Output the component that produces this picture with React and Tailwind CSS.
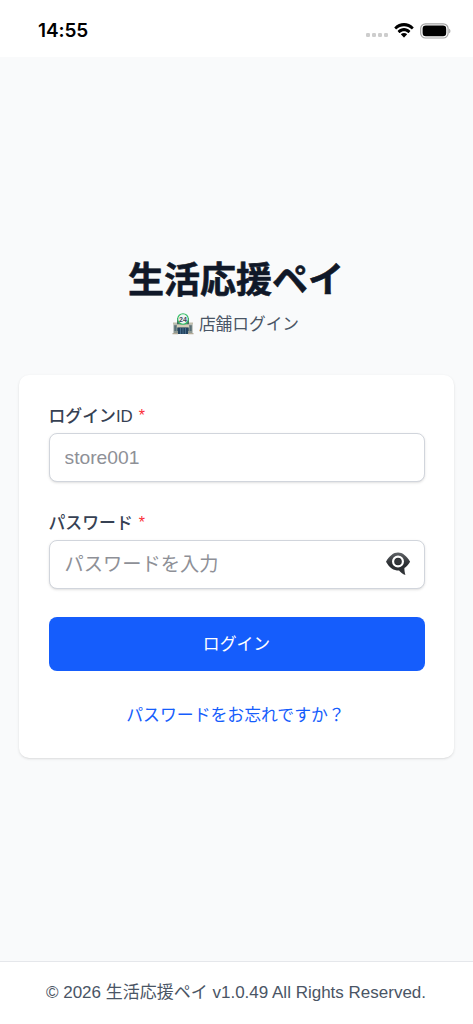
function StatusBar() {
  return (
    <div className="flex h-[57px] shrink-0 items-center justify-between bg-white pt-[4px] pr-[22px] pl-[38px]">
      <span className="pt-px font-['Inter'] text-[19px] leading-6 font-semibold tracking-[-0.1px] text-black">14:55</span>
      <div className="flex items-center">
        <div className="mt-[9px] mr-[6.5px] flex gap-[1.7px]">
          <span className="size-[4px] rounded-[1.2px] bg-[#cdcdcd]" />
          <span className="size-[4px] rounded-[1.2px] bg-[#cdcdcd]" />
          <span className="size-[4px] rounded-[1.2px] bg-[#cdcdcd]" />
          <span className="size-[4px] rounded-[1.2px] bg-[#cdcdcd]" />
        </div>
        <svg className="mr-[6px] h-[15px] w-[20px]" viewBox="0 0 17 12.3" preserveAspectRatio="none" fill="#000">
          <path d="M8.5 2.6c2.4 0 4.7.9 6.4 2.6.1.1.3.1.5 0l1.2-1.3c.2-.1.2-.4 0-.5-4.5-4.4-11.7-4.4-16.2 0-.2.1-.2.4 0 .5l1.2 1.3c.2.1.4.1.5 0C3.8 3.5 6.1 2.6 8.5 2.6Z" />
          <path d="M8.5 6.7c1.3 0 2.6.5 3.5 1.4.2.1.4.1.5 0l1.3-1.3c.1-.2.1-.4 0-.5-3-2.9-7.6-2.9-10.6 0-.1.1-.1.3 0 .5l1.3 1.3c.1.1.3.1.5 0 1-.9 2.2-1.4 3.5-1.4Z" />
          <path d="M11 9.5c.1-.2.1-.4 0-.5-1.400-1.200-3.600-1.200-5 0-.1.1-.1.3 0 .5l2.200 2.200c.2.2.4.2.6 0Z" />
        </svg>
        <svg className="h-[16px] w-[31px]" viewBox="0 0 31 16" fill="none">
          <rect x="0.7" y="0.8" width="27.4" height="14.2" rx="4.8" stroke="#a3a3a3" strokeWidth="1.2" />
          <rect x="2.6" y="2.6" width="23.6" height="10.6" rx="3.2" fill="#000" />
          <path d="M29.2 5.7c1.6.6 1.6 4 0 4.600Z" fill="#a3a3a3" />
        </svg>
      </div>
    </div>
  );
}

function StoreIcon() {
  return (
    <svg className="h-[22px] w-[22px]" viewBox="0 0 22 22">
      <path d="M1 9.5h20v2H1z" fill="#c2bfad" />
      <path d="M1.5 11.5h19V21h-19z" fill="#8f9992" />
      <path d="M2.5 12.5H6V18H2.5zM16 12.5h3.5V18H16z" fill="#4d6670" />
      <path d="M4.3 12.5V18M17.7 12.5V18" stroke="#a7b0aa" strokeWidth="0.6" />
      <path d="M5 5h12v6.5H5z" fill="#477064" />
      <path d="M5 11.5h12v3H5z" fill="#d4ceb8" />
      <path d="M6 14.5h10V21H6z" fill="#24435f" />
      <path d="M8.5 15v6M11 15v6M13.5 15v6" stroke="#5f88aa" strokeWidth="0.6" />
      <path d="M.5 20H6v1.3H.5zM16 20h5.5v1.3H16z" fill="#b3aa98" />
      <circle cx="11" cy="6" r="5.3" fill="#f1f6f3" stroke="#32bd65" strokeWidth="1.1" />
      <text x="11" y="8.5" textAnchor="middle" className="font-['Liberation_Sans'] text-[7px] font-bold" fill="#40465b">24</text>
    </svg>
  );
}

function EyeBubbleIcon() {
  return (
    <svg className="mb-[2px] h-[24px] w-[25px]" viewBox="0 0 25 24">
      <defs>
        <linearGradient id="eye-shade" x1="0" y1="0" x2="0" y2="1">
          <stop offset="0" stopColor="#606367" />
          <stop offset="0.55" stopColor="#292c30" />
          <stop offset="1" stopColor="#34373b" />
        </linearGradient>
      </defs>
      <path d="M0 9.7C3.4 3.8 7.400.5 12 .5s8.600 3.300 12.100 9.200c-1.700 3-3.700 5-5.700 6.400-.1 2.600.4 4.700 1 7-2.900-1-4.900-2.700-6.400-4.500C7.500 18.600 3.400 15.700 0 9.700Z" fill="url(#eye-shade)" />
      <circle cx="12" cy="9.500" r="4.900" fill="#292c30" stroke="#fff" strokeWidth="2.200" />
      <circle cx="12" cy="9.500" r="3" fill="#34373b" />
    </svg>
  );
}

function Field({ label, type, placeholder, children }) {
  return (
    <div>
      <label className="block h-[24px] pt-px text-[16.85px] leading-[24px] font-medium text-[#364153]">
        {label}
        <span className="ml-[6px] inline-block -translate-y-px text-[16px] font-normal text-[#fb2c36]">*</span>
      </label>
      <div className="mt-[5px] flex h-[49px] items-center rounded-[8px] border-[1.2px] border-[#d1d5dc] bg-white pr-[13px] pl-[15px] shadow-sm">
        <input
          type={type}
          placeholder={placeholder}
          className="h-full min-w-0 flex-1 bg-transparent text-[19.26px] text-gray-900 outline-none placeholder:text-[#8e9097]"
        />
        {children}
      </div>
    </div>
  );
}

export default function App() {
  return (
    <div className="flex h-[1024px] w-full flex-col overflow-hidden bg-[#f9fafb] font-['Liberation_Sans','Noto_Sans_CJK_JP',sans-serif]">
      <StatusBar />

      <main className="flex flex-1 flex-col px-[19px] pt-[202px]">
        <h1 className="pr-px text-center text-[36px] leading-[44px] font-bold text-[#101828] [-webkit-text-stroke:0.6px_#101828]">
          生活応援ペイ
        </h1>
        <div className="mt-[8px] flex h-[26px] items-center justify-center gap-[5px] pr-[2px] text-[16.7px] leading-[26px] text-[#4a5565]">
          <StoreIcon />
          <span className="pt-[2px]">店舗ログイン</span>
        </div>

        {/* Login card */}
        <form className="mt-[38px] flex h-[383px] flex-col rounded-[10px] bg-white px-[29.5px] pt-[29px] shadow-sm">
          <div className="flex flex-col gap-[29px]">
            <Field label="ログインID" type="text" placeholder="store001" />
            <Field label="パスワード" type="password" placeholder="パスワードを入力">
              <button type="button" aria-label="パスワードを表示">
                <EyeBubbleIcon />
              </button>
            </Field>
          </div>
          <button
            type="button"
            className="mt-[28px] h-[54px] shrink-0 rounded-[8px] bg-[#155dfc] pt-[2px] text-[16.85px] leading-6 text-white"
          >
            ログイン
          </button>
          <a href="#" className="mt-[33px] self-center pr-[2px] text-[16.85px] leading-[24px] text-[#155dfc]">
            パスワードをお忘れですか？
          </a>
        </form>
      </main>

      <footer className="flex h-[63px] shrink-0 items-center justify-center border-t border-gray-200 bg-white pr-px text-[17px] leading-6 text-[#4a5565]">
        © 2026 生活応援ペイ v1.0.49 All Rights Reserved.
      </footer>
    </div>
  );
}
